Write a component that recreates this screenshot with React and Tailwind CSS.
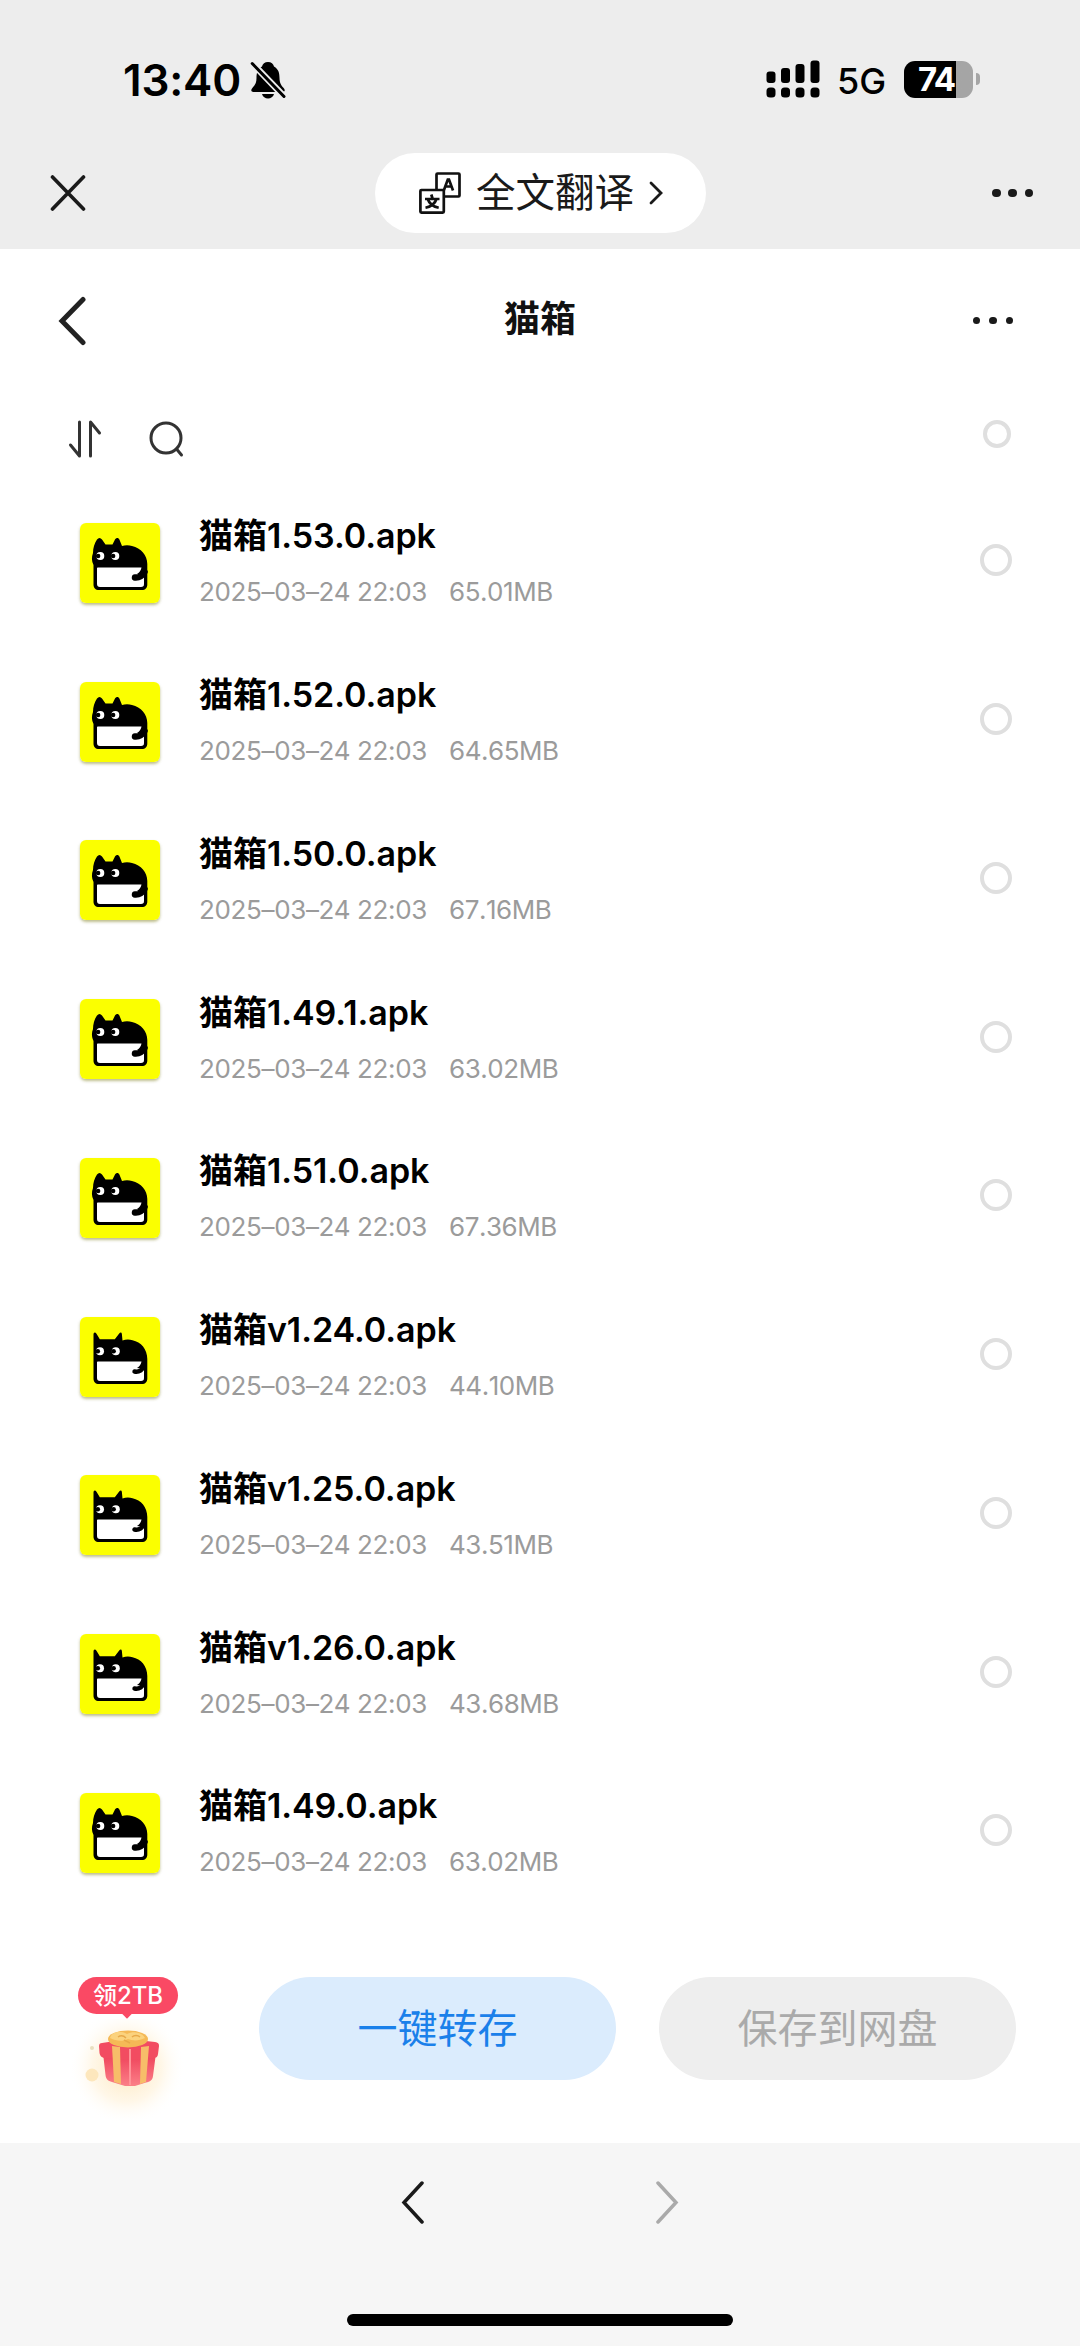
const files = [
  { name: '猫箱1.53.0.apk', size: '65.01MB' },
  { name: '猫箱1.52.0.apk', size: '64.65MB' },
  { name: '猫箱1.50.0.apk', size: '67.16MB' },
  { name: '猫箱1.49.1.apk', size: '63.02MB' },
  { name: '猫箱1.51.0.apk', size: '67.36MB' },
  { name: '猫箱v1.24.0.apk', size: '44.10MB', legacy: true },
  { name: '猫箱v1.25.0.apk', size: '43.51MB', legacy: true },
  { name: '猫箱v1.26.0.apk', size: '43.68MB', legacy: true },
  { name: '猫箱1.49.0.apk', size: '63.02MB' },
];

const BellOffIcon = () => (
  <svg className="h-[38px] w-[36px]" viewBox="0 0 36 38">
    <path
      d="M18 1c-3.200 0-5.500 2-6 4.500C7.500 8 6.500 12 6.500 17c0 6-2.500 8-4.500 10.500C.5 29.500 1.500 31 3.500 31h29c2 0 3-1.500 1.500-3.500-2-2.500-4.500-4.500-4.500-10.500 0-5-1-9-5.500-11.500C23.500 3 21.200 1 18 1z"
      fill="#000"
    />
    <path d="M12 33h12c-.8 2.800-3.200 4.500-6 4.500S12.800 35.800 12 33z" fill="#000" />
    <path d="M2 2l32.500 34" stroke="#ededed" strokeWidth="6.500" />
    <path d="M2.200 2.500L34 35.500" stroke="#000" strokeWidth="3" strokeLinecap="round" />
  </svg>
);

const SignalIcon = () => (
  <svg className="h-[38px] w-[54px]" viewBox="0 0 54 38" fill="#000">
    <rect x="0.500" y="11.500" width="9" height="11.500" rx="3" />
    <rect x="15" y="8" width="9" height="15" rx="3" />
    <rect x="29.500" y="4" width="9" height="19" rx="3" />
    <rect x="44.500" y="0.500" width="9" height="22.500" rx="3" />
    <rect x="0.500" y="27.500" width="9" height="10" rx="3.500" />
    <rect x="15" y="27.500" width="9" height="10" rx="3.500" />
    <rect x="29.500" y="27.500" width="9" height="10" rx="3.500" />
    <rect x="44.500" y="27.500" width="9" height="10" rx="3.500" />
  </svg>
);

const TranslateIcon = () => (
  <svg className="h-[42px] w-[42px]" viewBox="0 0 42 42" fill="none" stroke="#111" strokeWidth="2.700">
    <path d="M17.500 17V2.500a1 1 0 0 1 1-1h21a1 1 0 0 1 1 1v21a1 1 0 0 1-1 1H25" />
    <rect x="1.400" y="18" width="23.400" height="22.600" rx="1" />
    <path d="M24.800 18.500l4-11h1.200l4 11M26.300 14.500h6.500" />
    <path d="M6 27h14.500M12.300 22.500l1.200 4M8.700 27c1.500 4.500 5 7.500 11 8.800M17.500 27c-1.500 4.500-5 7.500-11 8.800" />
  </svg>
);

const Chevron = ({ className, d = 'M21 2L3 21.500L21 41', viewBox = '0 0 24 43', strokeWidth = 3.5 }) => (
  <svg className={className} viewBox={viewBox} fill="none" stroke="currentColor" strokeWidth={strokeWidth} strokeLinecap="round">
    <path d={d} />
  </svg>
);

const Dot = ({ className }) => <span className={`rounded-full bg-[#1a1a1a] ${className}`} />;

const CatIcon = ({ legacy }) => (
  <svg className="size-20 shrink-0 rounded-md shadow-[0_2px_3px_rgba(110,110,0,0.45)]" viewBox="0 0 80 80">
    <rect width="80" height="80" fill="#fbff00" />
    {legacy ? (
      <path
        d="M13.500 17.500c0-2.500 1.800-2.800 3-.8l3.300 5.600h15l4.400-5.900c1.300-1.500 2.600-1 2.700.8l.6 6.300c3-1.200 7-1.200 10-.3C61 25 67.300 32 67.300 42v19.500c0 3.500-2 5.500-5.500 5.500H19c-3.500 0-5.500-2-5.500-5.500z"
        fill="#000"
      />
    ) : (
      <path
        d="M13 30c0-5 1.500-10 4-13.500 1.500-2 3.500-2 5 0l3.500 5h7l2.500-5c1.500-2.200 3.500-2 4.500.3l2.500 6.200c3-1 7-1 10 0C61 25 67.300 32 67.300 41v20.500c0 3.500-2 5.500-5.500 5.500H19c-3.500 0-5.500-2-5.500-5.500V42C11.500 38 11.500 34 13 30z"
        fill="#000"
      />
    )}
    <path d="M18 44.500h43.500c-.5 3-2 5-4.500 6.500l7 1V61c0 2.200-1 3-3 3H20c-2 0-3-1-3-3V45.500c0-.6.400-1 1-1z" fill="#fff" />
    <path
      d={legacy ? 'M54.500 54.500c4.500 1 9-2 10-6.500' : 'M55 54.500c4 .3 7.500-2 9.500-5.500'}
      stroke="#000"
      strokeWidth={legacy ? 4.4 : 6.5}
      strokeLinecap="round"
      fill="none"
    />
    <circle cx={legacy ? 20 : 20.3} cy={legacy ? 34.3 : 33} r="4" fill="#fff" />
    <circle cx={legacy ? 35.8 : 35.3} cy={legacy ? 34.3 : 33} r="4" fill="#fff" />
    <circle cx={legacy ? 17.8 : 18.1} cy={legacy ? 34.3 : 33} r="2.300" fill="#000" />
    <circle cx={legacy ? 33.6 : 33.1} cy={legacy ? 34.3 : 33} r="2.300" fill="#000" />
  </svg>
);

const GiftIcon = () => (
  <svg className="mt-[5px] mr-[5px] h-[110px] w-[120px]" viewBox="0 0 120 110">
    <defs>
      <radialGradient id="glow">
        <stop offset="0.200" stopColor="#fdeccb" />
        <stop offset="0.600" stopColor="#fff5e2" stopOpacity="0.800" />
        <stop offset="1" stopColor="#fff" stopOpacity="0" />
      </radialGradient>
      <linearGradient id="box" x2="0" y2="1">
        <stop offset="0" stopColor="#ee4058" />
        <stop offset="1" stopColor="#fb7f88" />
      </linearGradient>
    </defs>
    <ellipse cx="61" cy="48" rx="58" ry="58" fill="url(#glow)" />
    <circle cx="26" cy="56" r="6.500" fill="#fde7bd" />
    <circle cx="26" cy="29" r="2" fill="#e9dfc0" />
    <path d="M37 34h53l-3 23c-.5 4-3 6-7 6.500l-11 3.500h-10l-13-4c-4-1-6-3-6.500-7z" fill="url(#box)" />
    <path d="M33 27c0-2 1-3 3-3l26-4 27 3c3 .3 4 1.500 4 4l-1 8c-.3 3-2 4-5 4l-24 2-23-2c-4 0-6-2-6.500-5z" fill="#f24c61" />
    <path d="M46 27l8 1 1 37-7-2z" fill="#f7bd69" />
    <path d="M75 28l8-1-3 36-6 2z" fill="#f7bd69" />
    <path d="M64 30v36" stroke="#ff9398" strokeWidth="2" />
    <ellipse cx="62" cy="20" rx="20" ry="8.500" fill="#f5b956" />
    <path d="M44 19c1-5 9-9 17-4 7-4 16-1 18 4-6 3-12 3-17 1-6 3-12 2-18-1z" fill="#fbd27d" />
    <path d="M52 18c3-2 6-1 8 1M66 18c2-2 6-2 8 0M58 21l6 3" stroke="#e8a849" strokeWidth="1.500" fill="none" />
  </svg>
);

const FileRow = ({ file }) => (
  <li className="flex h-[158.750px] items-center pr-[68px] pl-20">
    <CatIcon legacy={file.legacy} />
    <div className="mt-[3px] ml-[39px] flex flex-1 flex-col gap-2">
      <span className="text-[34px] leading-[48px] font-semibold tracking-[-0.050px] text-black">{file.name}</span>
      <span className="flex text-[26px] leading-[48px] text-[#9b9b9b]">
        <span className="w-[250px] tracking-[-0.350px] whitespace-nowrap">2025–03–24 22:03</span>
        <span className="tracking-[-0.450px] [font-kerning:none]">{file.size}</span>
      </span>
    </div>
    <span className="mb-[5px] size-8 rounded-full border-4 border-[#dfdfdf]" />
  </li>
);

export default function App() {
  return (
    <div className="flex h-[2346px] w-[1080px] flex-col overflow-hidden bg-white font-['Inter','Noto_Sans_CJK_SC',sans-serif] text-[#1a1a1a]">
      <header className="h-[249px] bg-[#ededed]">
        <div className="flex h-[153px] items-start justify-between pt-[60px] pr-[100px] pl-[123px]">
          <div className="flex items-center gap-[9px] text-black">
            <span className="text-[44px] leading-[40px] font-semibold tracking-[-0.200px]">13:40</span>
            <BellOffIcon />
          </div>
          <div className="flex h-[38px] items-center text-black">
            <SignalIcon />
            <span className="ml-[17px] w-[49px] pt-[4px] text-[36px] leading-[38px] font-medium">5G</span>
            <div className="ml-[18px] flex h-[37px] w-[69px] items-center rounded-[11px] bg-linear-to-r from-black from-75% to-[#a5a5a5] to-75% pl-[14px]">
              <span className="text-[33px] leading-[37px] font-bold tracking-[-1.500px] text-white">74</span>
            </div>
            <span className="ml-[2.500px] h-3 w-[4.500px] rounded-r-full bg-[#a5a5a5]" />
          </div>
        </div>
        <div className="flex h-20 items-center justify-between pr-[47px] pl-[50px]">
          <svg className="h-9 w-9" viewBox="0 0 36 36" stroke="#1a1a1a" strokeWidth="3.600" strokeLinecap="round">
            <path d="M2.500 2L33.500 34M33.500 2L2.500 34" />
          </svg>
          <div className="ml-[3px] flex h-20 w-[331px] items-center rounded-full bg-white pl-[44px]">
            <TranslateIcon />
            <span className="ml-[15px] text-[39.500px] leading-[60px]">全文翻译</span>
            <Chevron className="ml-[15px] h-6 w-[14px]" viewBox="0 0 14 24" d="M2 2L12 12L2 22" strokeWidth={2.800} />
          </div>
          <div className="flex gap-[7.700px]">
            <Dot className="size-[8.500px]" />
            <Dot className="size-[8.500px]" />
            <Dot className="size-[8.500px]" />
          </div>
        </div>
      </header>

      <nav className="grid h-[143px] grid-cols-[1fr_auto_1fr] items-center pr-[67px] pl-[67px]">
        <Chevron className="-ml-[9px] h-[50px] w-[28px] text-[#222]" viewBox="0 0 28 50" d="M25 3.500L4 25L25 46.500" strokeWidth={5} />
        <h1 className="-mt-[3px] text-center text-[36px] leading-[50px] font-bold text-[#111]">猫箱</h1>
        <div className="flex gap-[9.200px] justify-self-end">
          <Dot className="size-[7.300px]" />
          <Dot className="size-[7.300px]" />
          <Dot className="size-[7.300px]" />
        </div>
      </nav>

      <div className="flex h-[91.600px] items-center pr-[69px] pl-[68px]">
        <svg className="mt-[3px] h-[38px] w-[34px]" viewBox="0 0 34 38" fill="none" stroke="#333" strokeWidth="3" strokeLinecap="round" strokeLinejoin="round">
          <path d="M11.500 2V36L2.500 25M22.500 36V2L31.500 13" />
        </svg>
        <svg className="mt-[3px] ml-[47px] h-[38px] w-[36px]" viewBox="0 0 36 38" fill="none" stroke="#333" strokeWidth="3" strokeLinecap="round">
          <circle cx="17" cy="18" r="15" />
          <path d="M27.500 29L32.500 35" />
        </svg>
        <span className="mb-[8px] ml-auto size-7 rounded-full border-4 border-[#dfdfdf]" />
      </div>

      <ul>
        {files.map((file) => (
          <FileRow key={file.name} file={file} />
        ))}
      </ul>

      <div className="flex flex-1 items-start pt-[65px] pl-[68px]">
        <div className="flex w-[120px] flex-col items-center">
          <div className="relative flex h-[37px] w-[100px] items-center justify-center rounded-full bg-[#fa4964] text-[24px] leading-none font-medium text-white">
            领2TB
            <span className="absolute -bottom-[3px] left-[45px] size-2 rotate-45 bg-[#fa4964]" />
          </div>
          <GiftIcon />
        </div>
        <button className="ml-[71px] h-[103px] w-[357px] rounded-full bg-[#dbecfd] text-[40px] text-[#1a80ea]">一键转存</button>
        <button className="ml-[43px] h-[103px] w-[357px] rounded-full bg-[#eee] text-[40px] text-[#aaa]">保存到网盘</button>
      </div>

      <footer className="flex h-[203px] flex-col items-center justify-between bg-[#f6f6f6] pt-[38px] pb-[20px]">
        <div className="flex gap-[230px]">
          <Chevron className="h-[43px] w-6 text-[#1a1a1a]" />
          <Chevron className="h-[43px] w-6 text-[#aaa]" d="M3 2L21 21.500L3 41" />
        </div>
        <div className="h-3 w-[386px] rounded-full bg-black" />
      </footer>
    </div>
  );
}
